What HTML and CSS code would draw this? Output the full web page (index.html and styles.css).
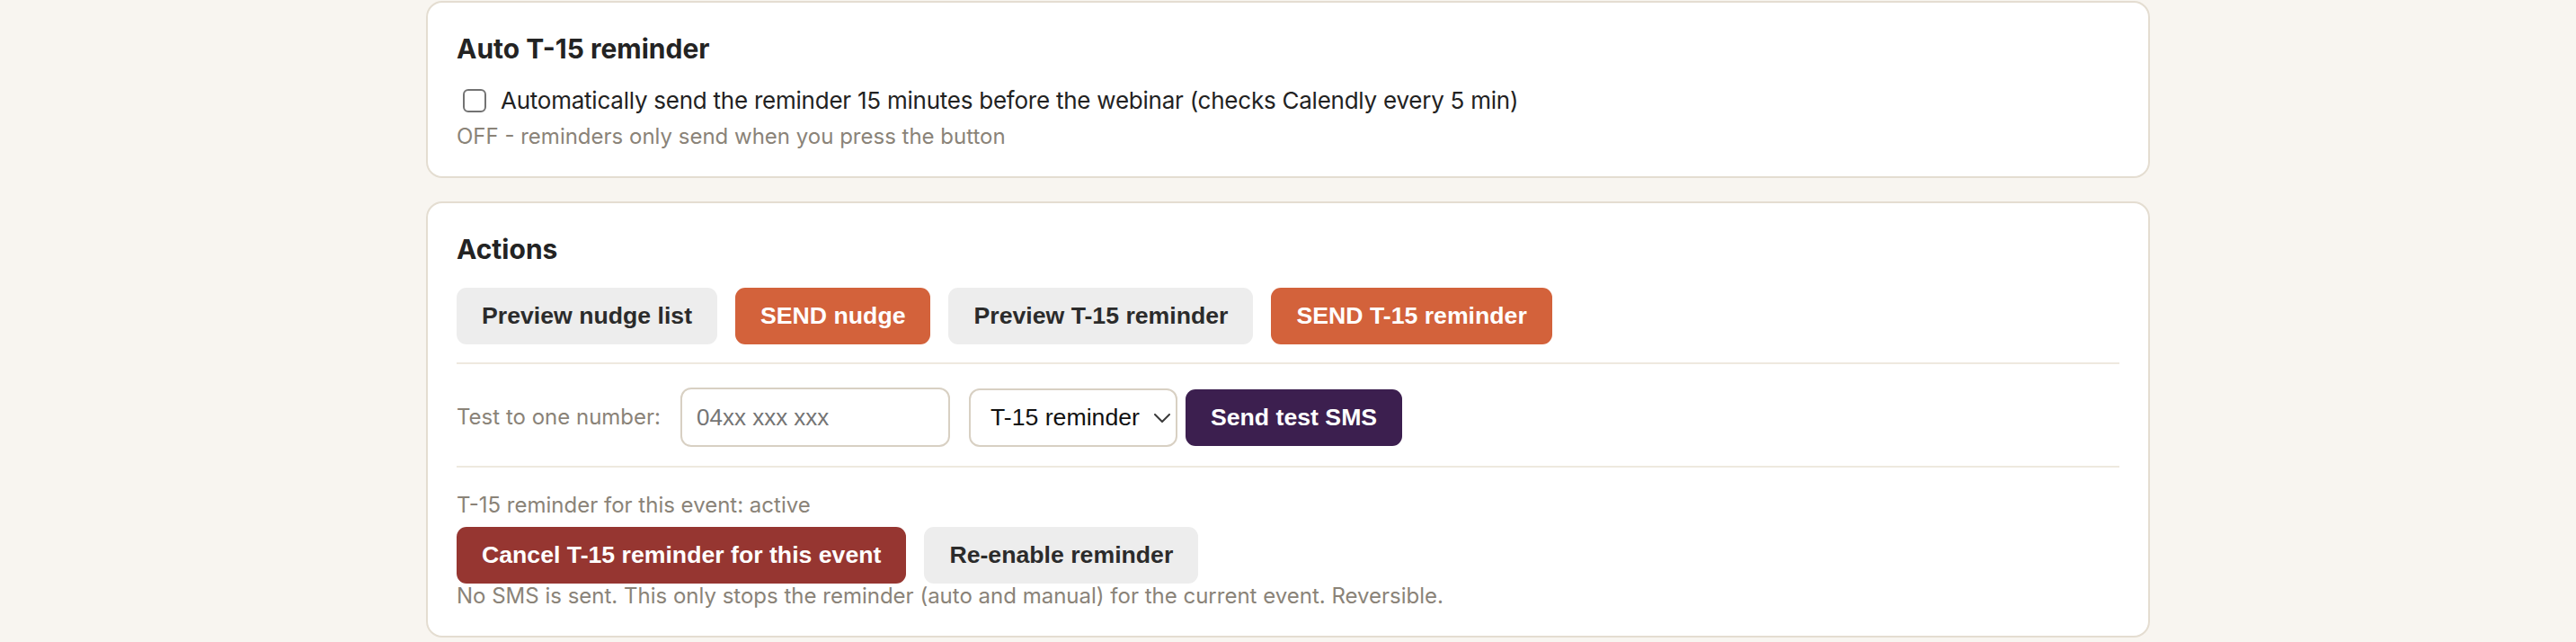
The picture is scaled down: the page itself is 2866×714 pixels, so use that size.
FILE: index.html
```html
<!DOCTYPE html>
<html lang="en">
<head>
<meta charset="utf-8">
<title>Reminders</title>
<link rel="stylesheet" href="styles.css">
</head>
<body>
<main class="page">
  <section class="card card-auto">
    <h2 class="card-title">Auto T-15 reminder</h2>
    <label class="check-row">
      <input type="checkbox" class="check">
      <span>Automatically send the reminder 15 minutes before the webinar (checks Calendly every 5 min)</span>
    </label>
    <p class="muted note-auto">OFF - reminders only send when you press the button</p>
  </section>

  <section class="card card-actions">
    <h2 class="card-title title-actions">Actions</h2>
    <div class="btn-row">
      <button class="btn btn-gray">Preview nudge list</button>
      <button class="btn btn-orange">SEND nudge</button>
      <button class="btn btn-gray">Preview T-15 reminder</button>
      <button class="btn btn-orange">SEND T-15 reminder</button>
    </div>
    <div class="divider"></div>
    <div class="test-row">
      <span class="muted test-label">Test to one number:</span>
      <input class="phone" type="text" placeholder="04xx xxx xxx">
      <span class="select-wrap">
        <select class="kind">
          <option>T-15 reminder</option>
          <option>Nudge</option>
        </select>
        <svg class="chev" width="18" height="10" viewBox="0 0 18 10"><path d="M1 1 L9 9 L17 1" fill="none" stroke="#3a3a3a" stroke-width="2" stroke-linecap="round" stroke-linejoin="round"/></svg>
      </span>
      <button class="btn btn-purple">Send test SMS</button>
    </div>
    <div class="divider divider-2"></div>
    <p class="muted status">T-15 reminder for this event: active</p>
    <div class="btn-row">
      <button class="btn btn-red">Cancel T-15 reminder for this event</button>
      <button class="btn btn-gray">Re-enable reminder</button>
    </div>
    <p class="muted foot">No SMS is sent. This only stops the reminder (auto and manual) for the current event. Reversible.</p>
  </section>
</main>
</body>
</html>
```

FILE: styles.css
```css
* { box-sizing: border-box; }

html, body {
  margin: 0;
  padding: 0;
  background: #f8f5f0;
  font-family: Inter, "Noto Sans", "Liberation Sans", sans-serif;
  color: #222222;
}

.page {
  width: 1918px;
  margin: 0 auto;
  padding-top: 1px;
}

.card {
  background: #ffffff;
  border: 2px solid #e4ddd1;
  border-radius: 18px;
  padding: 33px 32px 28px;
}

.card-actions {
  margin-top: 26px;
  padding-bottom: 30px;
}

.card-title {
  margin: 0 0 22px;
  font-size: 30px;
  line-height: 36px;
  font-weight: 700;
  color: #232323;
}

.title-actions { margin-bottom: 25px; }

.check-row {
  display: flex;
  align-items: center;
  font-size: 26px;
  line-height: 36px;
  letter-spacing: -0.24px;
  color: #222222;
}

.check {
  appearance: none;
  -webkit-appearance: none;
  width: 26px;
  height: 26px;
  margin: 0 16px 0 7px;
  border: 2px solid #737373;
  border-radius: 6px;
  background: #ffffff;
  flex: none;
}

.muted {
  color: #8a8378;
  font-size: 24px;
}

.note-auto {
  margin: 6px 0 0;
  line-height: 32px;
}

.btn-row {
  display: flex;
  gap: 20px;
}

.btn {
  font-family: "Liberation Sans", Arial, sans-serif;
  font-weight: 700;
  font-size: 26.67px;
  line-height: 31px;
  padding: 16px 28px;
  border: none;
  border-radius: 11px;
}

.btn-gray { background: #ededed; color: #2b2b2b; }
.btn-orange { background: #d3623b; color: #ffffff; }
.btn-purple { background: #3c1f4f; color: #ffffff; height: 63px; }
.btn-red { background: #963631; color: #ffffff; }

.divider {
  height: 2px;
  background: #eee9df;
  margin: 20px 0 26px;
}

.divider-2 { margin: 21px 0 26px; }

.test-row {
  display: flex;
  align-items: center;
  height: 66px;
}

.test-label {
  line-height: 32px;
  margin-right: 22px;
}

.phone {
  width: 300px;
  height: 66px;
  border: 2px solid #d8d0c3;
  border-radius: 12px;
  padding: 0 16px;
  font-family: "Liberation Sans", Arial, sans-serif;
  font-size: 26px;
  color: #222222;
  background: #ffffff;
  margin-right: 21px;
}

.phone::placeholder { color: #757575; }

.select-wrap {
  position: relative;
  display: inline-flex;
  margin-right: 9px;
}

.kind {
  appearance: none;
  -webkit-appearance: none;
  width: 232px;
  height: 65px;
  border: 2px solid #d8d0c3;
  border-radius: 12px;
  padding: 0 0 0 22px;
  font-family: "Liberation Sans", Arial, sans-serif;
  font-size: 26.67px;
  color: #111111;
  background: #ffffff;
}

.chev {
  position: absolute;
  right: 8px;
  top: 28px;
  pointer-events: none;
}

.status {
  margin: 0 0 8px;
  line-height: 32px;
}

.foot {
  margin: 0;
  line-height: 28px;
}
```
